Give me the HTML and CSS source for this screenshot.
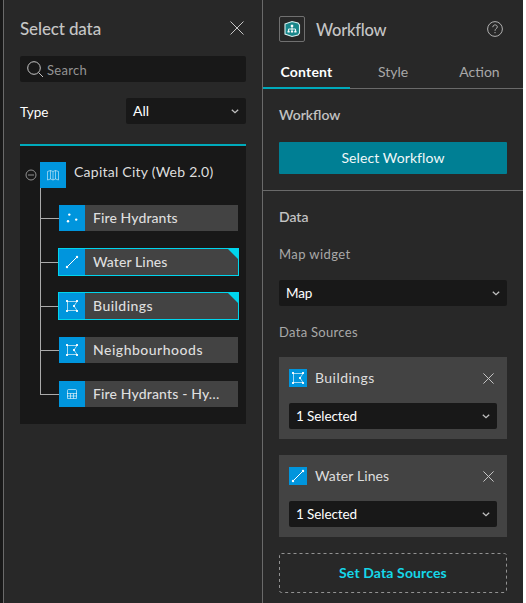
FILE: index.html
```html
<!DOCTYPE html>
<html lang="en">
<head>
<meta charset="utf-8">
<title>Workflow settings</title>
<link rel="stylesheet" href="styles.css">
</head>
<body>
<svg class="defs" width="0" height="0" aria-hidden="true">
  <symbol id="polygon" viewBox="0 0 14 14"><path d="M2 2.5H12L9 7L12 11.5H2.5V2.5" fill="none" stroke="currentColor" stroke-opacity=".65"/><path d="M1 1h2v2H1zM11 1h2v2h-2zM8 6h2v2H8zM11 11h2v2h-2zM1 11h2v2H1z" fill="currentColor" fill-opacity=".9"/></symbol>
  <symbol id="line" viewBox="0 0 14 14"><path d="M2 12L12 2" stroke="currentColor"/><circle cx="2" cy="12" r="1.2" fill="currentColor"/><circle cx="12" cy="2" r="1.2" fill="currentColor"/></symbol>
  <symbol id="points" viewBox="0 0 14 14"><g fill="currentColor"><circle cx="4.3" cy="3.6" r="1.2"/><circle cx="3" cy="10.3" r="1.2"/><circle cx="11.2" cy="8.6" r="1.2"/></g></symbol>
  <symbol id="table" viewBox="0 0 14 14"><path d="M2.5 11.5V3.5Q2.5 2.5 3.5 2.5H10.5Q11.5 2.5 11.5 3.5V11.5ZM2 6.5H12M2 9H12M5.5 6.5V11.5M8.5 6.5V11.5" fill="none" stroke="currentColor" stroke-opacity=".6"/></symbol>
  <symbol id="map" viewBox="0 0 14 14"><path d="M1.5 3.5L4.5 2.5L7 3.5L9.5 2.5L12.5 3.5V12L9.5 11L7 12L4.5 11L1.5 12ZM4.5 2.5V11M7 3.5V12M9.5 2.5V11" fill="none" stroke="currentColor" stroke-opacity=".65" stroke-width=".8"/></symbol>
  <symbol id="close" viewBox="0 0 14 14"><path d="M.5 .5L13.5 13.5M13.5 .5L.5 13.5" stroke="currentColor" vector-effect="non-scaling-stroke"/></symbol>
  <symbol id="chevron" viewBox="0 0 8 5"><path d="M.8 .8L4 3.7L7.2 .8" fill="none" stroke="currentColor" stroke-width="1.3"/></symbol>
</svg>
<div class="app">
  <aside class="data-panel">
    <header class="panel-head"><h1 class="title t-select">Select data</h1><svg class="close-lg"><use href="#close"/></svg></header>
    <div class="search">
      <svg width="17" height="17" viewBox="0 0 17 17"><g fill="none" stroke="currentColor"><circle cx="7" cy="7" r="6.3"/><path d="M11.5 11.5L16 16"/></g></svg>
      <span class="t-search">Search</span>
    </div>
    <div class="type-row"><span class="t-type">Type</span><div class="select type-select"><span>All</span><svg class="chevron"><use href="#chevron"/></svg></div></div>
    <div class="tree">
      <div class="root">
        <svg class="toggle" viewBox="0 0 12 12"><circle cx="6" cy="6" r="5" fill="none" stroke="currentColor"/><path d="M3 6H9" stroke="currentColor"/></svg>
        <span class="tile"><svg><use href="#map"/></svg></span>
        <span class="root-name">Capital City (Web 2.0)</span>
      </div>
      <ul class="layers">
        <li><div class="layer"><span class="tile"><svg><use href="#points"/></svg></span><span class="name n-fire">Fire Hydrants</span></div></li>
        <li><div class="layer selected"><span class="tile"><svg><use href="#line"/></svg></span><span class="name n-water">Water Lines</span></div></li>
        <li><div class="layer selected"><span class="tile"><svg><use href="#polygon"/></svg></span><span class="name n-build">Buildings</span></div></li>
        <li><div class="layer"><span class="tile"><svg><use href="#polygon"/></svg></span><span class="name n-neigh">Neighbourhoods</span></div></li>
        <li><div class="layer"><span class="tile"><svg><use href="#table"/></svg></span><span class="name n-hy">Fire Hydrants - Hy…</span></div></li>
      </ul>
    </div>
  </aside>
  <main class="settings">
    <header class="widget-head">
      <span class="widget-icon"><svg width="18" height="18" viewBox="0 0 18 18"><path d="M2 4L9 1.5L15 3L16.5 5V13L15 15L9 16.5L2 14Z" fill="#18868a" stroke="#d5eeee" stroke-width="1.1"/><path d="M9 6.5V11M5.5 12V9H12.5V12" fill="none" stroke="#fff" stroke-width=".9"/><path d="M7.8 4.8h2.4v2.2H7.8zM4.5 10.8h2.2v1.8H4.5zM7.9 10.8h2.2v1.8H7.9zM11.3 10.8h2.2v1.8h-2.2z" fill="#fff"/></svg></span>
      <h2 class="title t-workflow">Workflow</h2>
      <svg class="help" viewBox="0 0 16 16"><circle cx="8" cy="8" r="7.4" fill="none" stroke="currentColor"/><path d="M5.8 6.2C5.8 3.2 10.3 3.2 10.3 5.9C10.3 7.7 8 7.6 8 9.8M8 11V12.2" fill="none" stroke="currentColor"/></svg>
    </header>
    <nav class="tabs"><span class="tab active">Content</span><span class="tab t-style">Style</span><span class="tab t-action">Action</span></nav>
    <section class="workflow">
      <h3 class="t-wf">Workflow</h3>
      <div class="primary"><span>Select Workflow</span></div>
    </section>
    <section class="data">
      <h3 class="t-data">Data</h3>
      <div class="label t-mw">Map widget</div>
      <div class="select"><span class="t-map">Map</span><svg class="chevron"><use href="#chevron"/></svg></div>
      <div class="label t-ds">Data Sources</div>
      <div class="card">
        <div class="card-head"><span class="tile small"><svg><use href="#polygon"/></svg></span><span class="name n-build">Buildings</span><svg class="close-sm"><use href="#close"/></svg></div>
        <div class="select"><span class="t-one">1 Selected</span><svg class="chevron"><use href="#chevron"/></svg></div>
      </div>
      <div class="card">
        <div class="card-head"><span class="tile small"><svg><use href="#line"/></svg></span><span class="name n-water">Water Lines</span><svg class="close-sm"><use href="#close"/></svg></div>
        <div class="select"><span class="t-one">1 Selected</span><svg class="chevron"><use href="#chevron"/></svg></div>
      </div>
      <div class="set-sources"><svg class="dash"><rect x=".5" y=".5" width="227" height="39" rx="2"/></svg><span>Set Data Sources</span></div>
    </section>
  </main>
</div>
</body>
</html>
```

FILE: styles.css
```css
* { box-sizing: border-box; }
body { margin: 0; background: #fff; font: 14px/20px Lato, "Liberation Sans", sans-serif; color: #dedede; }
h1, h2, h3, ul { margin: 0; padding: 0; font-weight: 500; list-style: none; }
svg { display: block; flex: none; }
.defs { position: absolute; }
.app { display: flex; width: 523px; height: 603px; padding-left: 3px; background: #181818; overflow: hidden; white-space: nowrap; }
.data-panel { width: 260px; flex: none; padding: 16px 16px 0; border: solid #6a6a6a; border-width: 0 1px; background: #282828; }
.panel-head { display: flex; justify-content: space-between; align-items: center; height: 24px; }
.title { font-size: 17px; line-height: 24px; color: #c5c5c5; }
.t-select { letter-spacing: -.13px; padding-top: 1px; }
.t-workflow { font-size: 16.5px; letter-spacing: -.22px; padding-top: 2px; }
.close-lg { width: 14px; height: 14px; margin-right: 2px; color: #c5c5c5; }
.search { display: flex; align-items: center; gap: 3px; height: 26px; margin-top: 16px; padding-left: 7px; border-radius: 2px; background: #181818; color: #c5c5c5; font-size: 13px; }
.search span { color: #949494; padding-top: 1px; letter-spacing: .3px; }
.type-row { display: flex; align-items: center; justify-content: space-between; margin-top: 16px; font-size: 13.5px; color: #fff; }
.t-type { padding-top: 1px; }
.select { display: flex; align-items: center; justify-content: space-between; height: 26px; padding: 0 7px; border-radius: 2px; background: #181818; color: #fff; font-size: 13.5px; }
.type-select { width: 120px; font-size: 14px; }
.t-one { letter-spacing: -.1px; }
.t-map { letter-spacing: -.2px; }
.chevron { width: 8px; height: 5px; color: #c0c0c0; }
.tree { height: 280px; margin-top: 20px; border-top: 2px solid #00aabb; padding-top: 16px; background: #181818; }
.root { display: flex; height: 26px; padding-left: 5px; }
.toggle { width: 12px; height: 12px; margin: 7px 3px 0 0; color: #909090; }
.tile { display: flex; align-items: center; justify-content: center; width: 26px; height: 26px; flex: none; background: #0095dd; color: #fff; }
.tile svg { width: 14px; height: 14px; }
.tile.small { width: 18px; height: 18px; }
.root-name { margin-left: 8px; letter-spacing: .24px; }
.layers { margin-left: 20px; display: grid; grid-auto-rows: 44px; }
.layers li { display: flex; align-items: flex-end; position: relative; padding: 0 8px 1px 19px; }
.layers li::before { content: ""; position: absolute; left: 0; top: 0; bottom: 0; width: 1px; background: #aaa; }
.layers li:last-child::before { bottom: 13px; }
.layers li::after { content: ""; position: absolute; left: 0; bottom: 13px; width: 19px; height: 1px; background: #aaa; }
.layer { display: flex; align-items: center; flex: 1; height: 26px; background: #434343; position: relative; z-index: 1; }
.layer .name { margin-left: 8px; }
.n-fire, .n-water { letter-spacing: .1px; }
.n-build { letter-spacing: .45px; }
.n-neigh { letter-spacing: .5px; }
.n-hy { letter-spacing: .15px; }
.selected { box-shadow: 0 0 0 1px #00d5ed; }
.selected::after { content: ""; position: absolute; top: 0; right: 0; border-top: 10px solid #00d5ed; border-left: 10px solid transparent; }
.settings { width: 260px; background: #282828; }
.widget-head { display: flex; align-items: center; height: 58px; padding: 0 20px 0 16px; }
.widget-icon { display: flex; align-items: center; justify-content: center; width: 26px; height: 26px; margin-right: 11px; border: 1px solid #707070; border-radius: 2px; }
.help { width: 16px; height: 16px; margin-left: auto; color: #b0b0b0; }
.tabs { display: grid; grid-template-columns: 87px 86px 87px; height: 31px; text-align: center; line-height: 28px; color: #a8a8a8; background: linear-gradient(#6a6a6a, #6a6a6a) 0 30px / 100% 1px no-repeat; }
.active { color: #fff; font-weight: 700; letter-spacing: .2px; border-bottom: 2px solid #00aabb; }
h3 { font-size: 14px; line-height: 20px; color: #c5c5c5; -webkit-text-stroke: .1px; }
.workflow { height: 102px; padding: 16px 16px 0; border-bottom: 1px solid #6a6a6a; }
.primary { display: flex; align-items: center; justify-content: center; height: 32px; margin-top: 17px; border-radius: 1px; background: #007f94; color: #f0f8f8; letter-spacing: .1px; }
.data { padding: 16px 16px 0; }
.label { font-size: 13px; line-height: 20px; color: #a8a8a8; margin-top: 17px; }
.t-mw { letter-spacing: .42px; }
.t-ds { letter-spacing: .3px; }
.label + .select { margin-top: 16px; }
.select + .label { margin-top: 16px; }
.card { height: 82px; margin-top: 15px; padding: 12px 10px 10px; background: #434343; }
.card + .card { margin-top: 16px; }
.card-head { display: flex; align-items: center; height: 18px; margin-bottom: 16px; }
.card-head .name { margin-left: 8px; }
.close-sm { width: 11px; height: 11px; margin: 0 3px 0 auto; color: #c5c5c5; }
.set-sources { display: flex; align-items: center; justify-content: center; position: relative; height: 40px; margin-top: 16px; color: #15d7e8; font-weight: 700; letter-spacing: .13px; }
.dash { position: absolute; inset: 0; width: 228px; height: 40px; fill: none; stroke: #929292; stroke-dasharray: 3 3; }
```
